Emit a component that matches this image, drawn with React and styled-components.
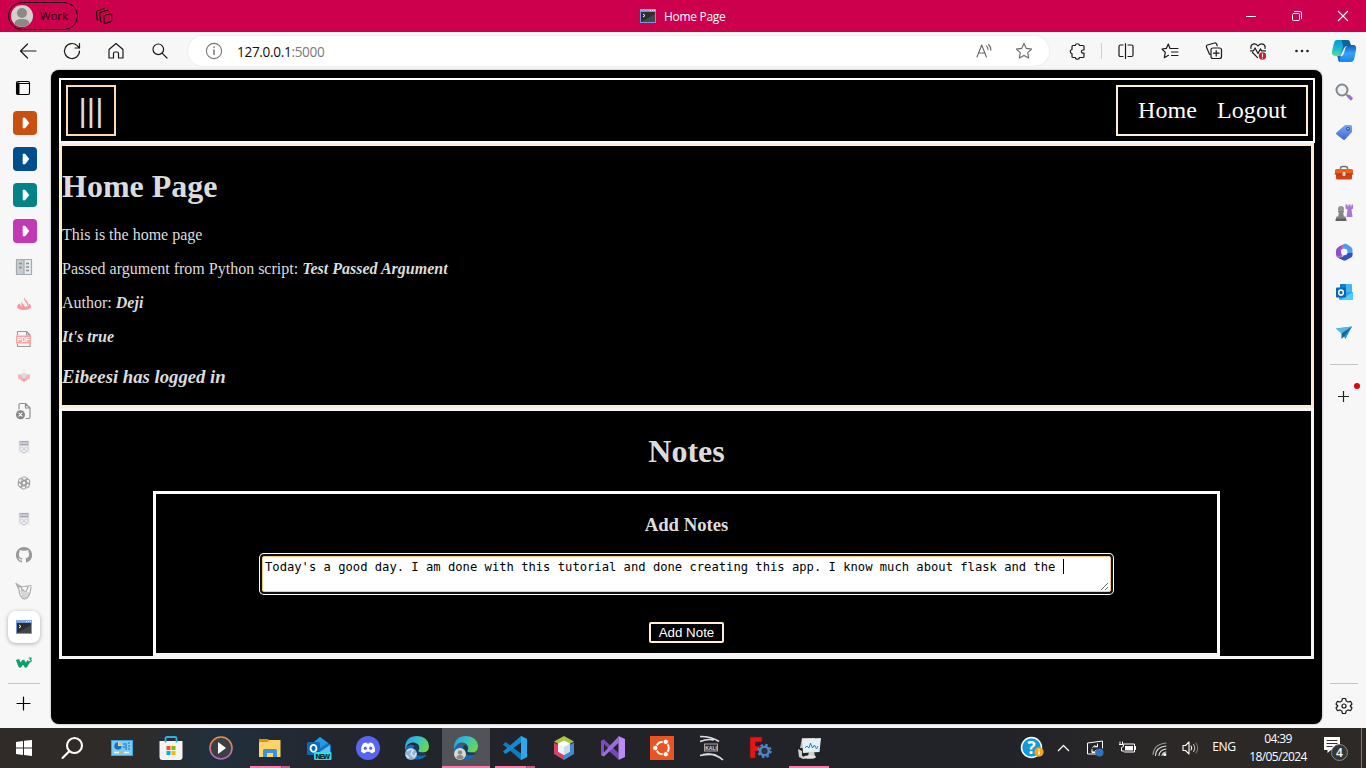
import React from "react";
import styled, { createGlobalStyle } from "styled-components";

const GlobalStyle = createGlobalStyle`
  * { box-sizing: border-box; }
  html, body { margin: 0; padding: 0; overflow: hidden; }
`;

const UI = `"Open Sans", "Noto Sans", sans-serif`;
const SERIF = `"Liberation Serif", "Times New Roman", serif`;

const Desktop = styled.div`
  width: 1366px;
  height: 768px;
  display: flex;
  flex-direction: column;
  background: #f7f7f7;
  font-family: ${UI};
  overflow: hidden;
`;

/* ---------- window chrome ---------- */
const TitleBar = styled.header`
  height: 32px;
  display: flex;
  background: #cc004c;
`;
const TitleLeft = styled.div`
  width: 640px;
  display: flex;
  align-items: center;
  padding-left: 8px;
`;
const ProfilePill = styled.div`
  width: 70px;
  height: 28px;
  border: 1px solid #16000a;
  border-radius: 14px;
  display: flex;
  align-items: center;
  gap: 7px;
  padding-left: 2px;
  margin-right: 14px;
  font-size: 11.5px;
  line-height: 20px;
  padding-bottom: 1px;
  letter-spacing: -0.1px;
  color: #16000a;
`;
const TabTitle = styled.div`
  display: flex;
  align-items: center;
  gap: 8px;
  color: #fff;
  font-size: 12px;
  letter-spacing: -0.3px;
`;
const WindowButtons = styled.div`
  display: flex;
  margin-left: auto;
`;
const Slot = styled.div`
  width: ${(p) => p.$w}px;
  height: ${(p) => p.$h}px;
  flex: none;
  display: flex;
  align-items: center;
  justify-content: center;
`;
const Toolbar = styled.div`
  height: 38px;
  display: flex;
  align-items: center;
  padding-left: 6px;
`;
const AddressBar = styled.div`
  width: 861px;
  height: 30px;
  margin: 0 6px;
  padding: 0 5px 0 14px;
  border-radius: 15px;
  background: #fff;
  box-shadow: 0 0 3px rgba(0, 0, 0, 0.08);
  display: flex;
  align-items: center;
`;
const Url = styled.span`
  margin-left: 11px;
  flex: 1;
  font-size: 13.6px;
  letter-spacing: -0.33px;
  color: #111;
  span { color: #7a7a7a; }
`;
const ToolDivider = styled.i`
  width: 1px;
  height: 16px;
  margin: 0 2px;
  background: #cfcfcf;
`;
const Body = styled.div`
  height: 658px;
  display: flex;
`;
const Rail = styled.aside`
  width: ${(p) => p.$w}px;
  padding: 0 ${(p) => p.$pr}px 0 0;
  display: flex;
  flex-direction: column;
  align-items: center;
`;
const RailDivider = styled.i`
  width: ${(p) => p.$w}px;
  height: 1px;
  flex: none;
  background: #c4c4c4;
`;
const Grow = styled.div`
  flex: 1;
`;
const ColorTile = styled.div`
  width: 24px;
  height: 24px;
  border-radius: 4px;
  background: ${(p) => p.$c};
  margin-left: 2px;
  display: flex;
  align-items: center;
  justify-content: center;
`;
const ActiveTab = styled.div`
  width: 32px;
  height: 32px;
  border-radius: 8px;
  background: #fff;
  box-shadow: 0 1px 4px rgba(0, 0, 0, 0.3);
  display: flex;
  align-items: center;
  justify-content: center;
`;

/* ---------- web page ---------- */
const Viewport = styled.main`
  width: 1271px;
  height: 654px;
  padding: 8px 7px 0 8px;
  border-radius: 8px;
  background: #000;
  box-shadow: 0 0 2px rgba(0, 0, 0, 0.45);
  color: gainsboro;
  font-family: ${SERIF};
  font-size: 16px;
`;
const Nav = styled.nav`
  width: 1256px;
  height: 65px;
  border: 2px solid #fff;
  border-bottom-color: ghostwhite;
  padding: 5px;
  display: flex;
  justify-content: space-between;
`;
const MenuButton = styled.button`
  width: 50px;
  height: 51px;
  border: 2px solid peachpuff;
  background: #000;
  color: gainsboro;
  font: 32px "Liberation Sans", Arial, sans-serif;
  padding: 0 0 1px;
`;
const Links = styled.div`
  width: 192px;
  height: 51px;
  border: 2px solid papayawhip;
  padding: 0 0 1px 20px;
  display: flex;
  align-items: center;
  gap: 20px;
  font-size: 24px;
  letter-spacing: 0.08px;
  color: #fff;
`;
const Intro = styled.section`
  width: 1255px;
  height: 265px;
  border: 3px solid blanchedalmond;
  overflow: hidden;
`;
const Heading = styled.h1`
  font-size: 32px;
  line-height: 37px;
  margin: 22px 0 21px;
`;
const SubHeading = styled.h3`
  font-size: 18.72px;
  line-height: 22px;
  margin: 20px 0 18px;
`;
const Line = styled.p`
  line-height: 18px;
  margin: 16px 0;
`;
const Em = styled.em`
  font-weight: bold;
`;
const Notes = styled.section`
  width: 1255px;
  height: 251px;
  border: 3px solid whitesmoke;
  display: flex;
  flex-direction: column;
  align-items: center;
`;
const NoteForm = styled.form`
  width: 1067px;
  height: 165px;
  flex: none;
  border: 3px solid #fff;
  border-bottom-color: #f8f4f8;
  display: flex;
  flex-direction: column;
  align-items: center;
`;
const NoteField = styled.div`
  width: 849px;
  height: 36px;
  margin: 2px 0 30px;
  border: 1px solid #f5c98a;
  border-radius: 2px;
  box-shadow: 0 0 0 2px #101010, 0 0 0 3px #fff;
  background: #fff;
  padding: 2px 1px 0 2px;
  display: flex;
  color: #000;
  font: 12.17px/17px "DejaVu Sans Mono", monospace;
  white-space: pre;
`;
const Caret = styled.i`
  width: 1px;
  height: 15px;
  background: #000;
`;
const Grip = styled.div`
  margin-left: auto;
  align-self: flex-end;
  display: flex;
`;
const AddButton = styled.button`
  width: 75px;
  height: 21px;
  padding: 0;
  border: 2px solid papayawhip;
  border-radius: 2px;
  background: #000;
  color: #fff;
  font: 13.33px "Liberation Sans", Arial, sans-serif;
`;

/* ---------- taskbar ---------- */
const TaskBar = styled.footer`
  height: 40px;
  display: flex;
  color: #fff;
  background: linear-gradient(90deg, #302b28 0, #2f2b29 130px, #20303c 215px, #23262e 330px, #222329 560px, #222329 1000px, #2b2826 1180px, #2e2925 1366px);
`;
const TaskItem = styled.div`
  width: 48px;
  height: 40px;
  flex: none;
  margin-right: ${(p) => p.$gap ?? 1}px;
  padding-bottom: 2px;
  display: flex;
  flex-direction: column;
  align-items: center;
  background: ${(p) => (p.$active ? "#515359" : "transparent")};
`;
const TaskIcon = styled.div`
  height: 38px;
  flex: none;
  padding-top: 2px;
  display: flex;
  align-items: center;
`;
const Underline = styled.i`
  width: ${(p) => p.$w}px;
  height: 2px;
  flex: none;
  background: ${(p) => (p.$split ? "linear-gradient(90deg, #ff78a9 31px, #8d3f61 31px, #c9588a 32px)" : "#ff78a9")};
`;
const Tray = styled.div`
  margin-left: auto;
  width: 350px;
  display: flex;
  align-items: center;
`;
const Lang = styled.div`
  width: 36px;
  text-align: center;
  font-size: 12.2px;
  line-height: 18px;
  padding-bottom: 2px;
  letter-spacing: -0.5px;
`;
const Clock = styled.div`
  width: 72px;
  text-align: center;
  font-size: 12px;
  line-height: 18px;
  padding-bottom: 1px;
  letter-spacing: -0.62px;
  white-space: nowrap;
`;
const ShowDesktop = styled.i`
  width: 1px;
  height: 40px;
  margin-left: auto;
  margin-right: 4px;
  background: #7b7875;
`;

/* Icons are drawn on a pixel grid; s is both the box and the viewBox size. */
const Svg = ({ s = 24, children, c = "#1b1b1b", w = 1.2 }) => (
  <svg width={s} height={s} viewBox={`0 0 ${s} ${s}`} fill="none" stroke={c} strokeWidth={w} strokeLinecap="round" strokeLinejoin="round">
    {children}
  </svg>
);

const Terminal = ({ s = 16 }) => (
  <svg width={s} height={s} viewBox="0 0 16 16">
    <rect x="0" y="1" width="16" height="14" fill="#6f9bd8" />
    <rect x="0" y="1" width="16" height="2" fill="#7fa9e0" />
    <path d="M10 2.500h1M12 2.500h1M14 2.500h1" stroke="#dbe8fb" />
    <rect x="1" y="4" width="14" height="10" fill="#2b2d2f" />
    <path d="M1 14 15 6v8z" fill="#44474a" />
    <path d="M3 6l2 1.500L3 9" stroke="#fff" fill="none" />
  </svg>
);
const Back = () => <Svg><path d="M20 12H4.500M11.500 5l-7 7 7 7" /></Svg>;
const Refresh = () => <Svg><path d="M19.500 12a7.500 7.500 0 1 1-2.300-5.400L19.500 9M19.500 4.500V9H15" /></Svg>;
const HomeIcon = () => <Svg><path d="M5 10.500 12 4.500l7 6V19h-4.500v-4.500a1.500 1.500 0 0 0-1.500-1.500h-2a1.500 1.500 0 0 0-1.500 1.500V19H5z" /></Svg>;
const Search = () => <Svg><circle cx="10.300" cy="10.300" r="5.300" /><path d="M14.300 14.300 19 19" /></Svg>;
const Info = () => <Svg c="#777" w={1.1}><circle cx="12" cy="12" r="7.600" /><path d="M12 11v4.500M12 8v.500" strokeWidth={1.5} /></Svg>;
const ReadAloud = () => <Svg c="#666" w={1.1}><path d="m5 18 4.700-12 4.700 12M6.600 14h6.200M14.500 6.800q1.500 1.500 1.500 3.800M16.600 5.500q2.600 2.600 2.300 5.600" /></Svg>;
const starPath = "m12 4.500 2.300 4.900 5.300.700-3.900 3.600 1 5.300-4.700-2.600L7.300 19l1-5.300-3.900-3.600 5.300-.700z";
const Star = () => <Svg c="#666" w={1.1}><path d={starPath} /></Svg>;
const Puzzle = () => (
  <Svg><path d="M9 6.500h1.200a2.200 2.200 0 0 1 4.300 0H18a1 1 0 0 1 1 1V11h-1a1.500 1.500 0 0 0 0 3.200h1v3.300a1 1 0 0 1-1 1h-3.500a2.200 2.200 0 0 1-4.300 0H8a1 1 0 0 1-1-1V14.700a2.200 2.200 0 0 1 0-4.300V7.500a1 1 0 0 1 1-1z" /></Svg>
);
const Split = () => <Svg><path d="M9 6H6.500A1.500 1.500 0 0 0 5 7.500v8A1.500 1.500 0 0 0 6.500 17.500H9M14 6h3.500A1.500 1.500 0 0 1 19 7.500v8.500a1.500 1.500 0 0 1-1.500 1.500H14M11.500 4.500v15" /></Svg>;
const Favorites = () => <Svg><path d="M13.500 9.500H12L10.300 5 8.300 9.400 4 10l3.300 3.400-1 5.300 4.200-2.400M13.500 9.500H20M13.500 13H20M13.500 16.500H20" /></Svg>;
const Collections = () => <Svg><rect x="9" y="9" width="10.500" height="10.500" rx="2" /><path d="M14.200 11.500v5.500M11.500 14.200H17M8.500 15.500l-1-.300L4.500 8.300A1.700 1.700 0 0 1 5.500 6l7-2a1.700 1.700 0 0 1 2.100 1l.600 1.800" /></Svg>;
const Heart = () => (
  <Svg>
    <path d="M5 9.500C4 5 9.500 3 12 7c2.500-4 8-2 7 2.500M6.500 13.500l5 5.200M4.500 11.800h3l1.500-2.800 3 5.500 2.500-4.600 1 1.900h4" />
    <circle cx="16.500" cy="17" r="3.700" fill="#c4262e" stroke="none" />
    <path d="M16.500 15v2.400M16.500 19v.100" stroke="#fff" strokeWidth="1" />
  </Svg>
);
const Dots = () => <Svg w={0}><g fill="#222"><circle cx="6.500" cy="12" r="1.300" /><circle cx="12" cy="12" r="1.300" /><circle cx="17.500" cy="12" r="1.300" /></g></Svg>;
const Copilot = () => (
  <svg width="26" height="26" viewBox="0 0 26 26">
    <defs>
      <linearGradient id="cpA" x1="0" y1="0" x2="0" y2="1"><stop offset="0" stopColor="#0898dc" /><stop offset=".5" stopColor="#19b6d3" /><stop offset="1" stopColor="#58df8c" /></linearGradient>
      <linearGradient id="cpB" x1="0" y1="0" x2="0" y2="1"><stop offset="0" stopColor="#0a5fc0" /><stop offset=".5" stopColor="#36a2f5" /><stop offset="1" stopColor="#1485f2" /></linearGradient>
    </defs>
    <path d="M6 2h10q3 0 2.500 2.200L14 15q-.800 3-4 3H5q-5 0-4-5L3 5q.600-3 3-3z" fill="url(#cpA)" />
    <path d="M20 7h2q4 0 3 5l-1.500 8q-.800 4-4 4H10q-3 0-2.500-3l3.500-10Q12 7 15 7z" fill="url(#cpB)" />
    <path d="M10.500 2H16q2.500 0 3 2l1.200 4h-5q-2 0-2.500 2z" fill="#0b6398" />
    <path d="M13 10.500Q13.800 8 16 8q-1.500 1-2 3l-1 4q-.800 3-3 3.500H8q2-.500 2.800-3z" fill="#fff" />
    <path d="M6 18h4q-1 1-1 3v3q-1.500 0-2-3-.300-2.500-1-3z" fill="#1764d8" />
  </svg>
);
const Workspaces = () => (
  <Svg c="#180009" w={1.1}>
    <path d="M13 11.200 18.500 9.700a1 1 0 0 1 1.200 1V16.500a1 1 0 0 1-.700 1l-5.500 2a1 1 0 0 1-1.300-.800l-.200-6.300a1.200 1.200 0 0 1 1-1.200z" />
    <path d="M9.500 17.700a1 1 0 0 1-1-1L7.700 9.500a1.200 1.200 0 0 1 1-1.300l6.300-1.900q1-.300 1 .700M6 16a1 1 0 0 1-1-1L4.500 8.200a1.200 1.200 0 0 1 .800-1.200L12 4.500" />
  </Svg>
);

/* rail icons */
const TabPane = () => <Svg w={1.1} c="#000"><rect x="4.500" y="5.500" width="13" height="13" rx="1.500" /><path d="M5 7.500h12.500" /><path d="M6 6.500v12" strokeWidth="3" strokeLinecap="butt" /></Svg>;
const PlayHead = () => <svg width="24" height="24"><path d="M10 7h2l4 5-4 5h-2z" fill="#fff" stroke="#fff" strokeLinejoin="round" strokeWidth=".6" /></svg>;
const Panel = () => (
  <Svg c="#a4aaaf" w={1.2}>
    <rect x="4.500" y="4.500" width="15" height="15" fill="#e6eaed" /><rect x="5" y="5" width="7" height="14" fill="#c4ccd1" stroke="none" /><path d="M12 5v14" />
    <path d="M7 8.500h3M7 12.500h3M14 8.500h3M14 12h3M14 15.500h3" stroke="#888f95" strokeLinecap="butt" strokeWidth="1.500" />
  </Svg>
);
const Flame = () => (
  <Svg w={0}><g fill="#f8989c"><path d="M8 12.500c-5 2-3.500 6.500 4 6.500s9-4.500 4.500-6.500Q17 17 12 16.500q-4 0-4-4z" /><path d="M12.300 6q-1.200 2 .700 4 2.500 3 2 5 2.500-2-.500-5.500Q12.300 8 12.300 6zM10.500 9q-1.500 2 1 4.500 1.800 1.500 1 3.500-5.500-1.500-2-8z" /><path d="M8.500 14q0 3.500 7.500 1v2.500q-6 2-9-1z" /></g></Svg>
);
const Pdf = () => (
  <Svg c="#999" w={1.1}>
    <path d="M5.500 8V4.500h9l3.500 3.500v11.500H5.500V17M14.500 4.500V8H18" />
    <rect x="4" y="8.500" width="15" height="8" fill="#ffa3a1" stroke="none" />
    <text x="11.500" y="14.800" textAnchor="middle" fontSize="6.300" fontWeight="bold" fontFamily="Liberation Sans, sans-serif" fill="#fff" stroke="none">PDF</text>
  </Svg>
);
const Bloom = () => <Svg w={0}><path d="M6 11l3 1 3-2 3 2 3-1v4.500l-6 3.500-6-3.500z" fill="#f9b4ba" /><path d="m8 11 4 5 4-5-4-1.500z" fill="#cfdcf4" /><path d="m10.500 12 1.500 2 1.500-2-1.500-1z" fill="#f2dc9c" /><path d="m9 15 3 2 3-2-3 3.500z" fill="#f38c94" /><path d="m8 8 4-2 4 2-4 2z" fill="#fbeef0" /></Svg>;
const BrokenFile = () => (
  <Svg c="#8f8f8f">
    <path d="M7 10V6a1.500 1.500 0 0 1 1.500-1.500h5L18 9v9a1.500 1.500 0 0 1-1.500 1.500H14M13.500 4.500V9H18" />
    <circle cx="8.500" cy="15.700" r="4.500" fill="#858585" stroke="none" /><path d="m7 14.200 3 3m0-3-3 3" stroke="#fff" />
  </Svg>
);
const Badge = () => <Svg w={0}><rect x="6" y="5" width="12" height="14" fill="#f0f0f3" /><path d="M7.500 6h9v4.500h-9z" fill="#aaabb9" /><path d="M8.500 8h7" stroke="#ececf2" strokeWidth="1" strokeDasharray="1.500 1" /><path d="M8 11.500v4l4 2.500 4-2.500v-4M10 12l4 3.500m0-3.500-4 3.500" stroke="#c4c5cc" strokeWidth="1" fill="none" /></Svg>;
const Knot = () => (
  <Svg c="#9c9c9c" w={1}>
    {[0, 60, 120, 180, 240, 300].map((a) => <path key={a} transform={`rotate(${a} 12 12)`} d="M10 13V8.500a2.600 2.600 0 0 1 4-2.200M10 8.200l4.500 2.600M8.500 7.800 10 6.500" />)}
  </Svg>
);
const GitHub = () => (
  <Svg w={0}><path fill="#999" d="M12 4a8 8 0 0 0-2.600 15.600c.400.100.600-.200.600-.400v-1.600c-2.200.500-2.700-.900-2.900-1.400-.300-.700-.700-.900-.700-.900-.800-.500 0-.500 0-.500.800 0 1.300.800 1.300.800.700 1.300 1.900.900 2.400.700 0-.500.300-.900.500-1.100-1.800-.200-3.700-.900-3.700-4 0-.900.300-1.600.800-2.100-.100-.200-.300-1 .100-2.100 0 0 .700-.200 2.200.800a7.500 7.500 0 0 1 4 0c1.500-1 2.200-.800 2.200-.800.400 1.100.200 1.900.100 2.100.500.600.800 1.300.800 2.100 0 3.100-1.900 3.800-3.700 4 .300.300.600.700.600 1.500v2.500c0 .200.100.500.600.400A8 8 0 0 0 12 4z" /></Svg>
);
const Flask = () => (
  <Svg c="#aaa" w={1.2}><path d="m4 4.500 5 3 2 8M5 7l3 1M9 8l10-1.500M7 10q0 9 6 10 5-1 6-12M11 11l5 5M16 8l-4 9M10 17q5 3 8-3M4.500 5 7 11" /><path d="M8 12l3 7 5-1 1-5z" fill="#d5d5d5" stroke="none" /></Svg>
);
const W3 = () => (
  <Svg c="#0ba06b" w={3.4}><path d="m5.500 8.500 2.500 6.500 3.300-4.500 2.500 4.500 3-5" strokeLinecap="butt" /><path d="M17 7h2.300l-1.300 1.600q2 .300 1 1.700-.700.900-2 .200" strokeWidth="1.100" /></Svg>
);
const Plus = ({ c = "#000" }) => <Svg c={c} w={1.2}><path d="M11.500 5v13M5 11.500h13" /></Svg>;

const Magnifier = () => <Svg w={2} c="#858585"><circle cx="10" cy="10" r="5.500" fill="#eef3f7" /><path d="m15 15 1.500 1.500" /><path d="m17 16.500 2 2" stroke="#9d6dce" strokeWidth="3.300" /></Svg>;
const Tag = () => (
  <Svg w={0}><defs><linearGradient id="tg" x1="0" y1="0" x2="0" y2="1"><stop offset="0" stopColor="#7ea8f3" /><stop offset="1" stopColor="#3d67cf" /></linearGradient></defs>
    <path d="M13 5h5.500A1.500 1.500 0 0 1 20 6.500V12l-7 7.500q-1 .800-2 0L4.500 14.500q-1-1 0-2z" fill="url(#tg)" /><circle cx="16" cy="8.800" r="1.300" fill="#fff" stroke="#244a9d" strokeWidth="1.200" /></Svg>
);
const Toolbox = () => <Svg w={0}><path d="M8.500 10V8.500a2 2 0 0 1 2-2h3a2 2 0 0 1 2 2V10" stroke="#727272" strokeWidth="1.500" /><path d="M4 13h16v5a1.500 1.500 0 0 1-1.500 1.500h-13A1.500 1.500 0 0 1 4 18z" fill="#d14212" /><path d="M3 10.500A1.500 1.500 0 0 1 4.500 9h15a1.500 1.500 0 0 1 1.500 1.500V14H3z" fill="#ee5f20" /><path d="M3 14h18" stroke="#a9320a" strokeWidth="1" /><rect x="10.500" y="12" width="3" height="4" rx="1" fill="#d9d9d9" /></Svg>;
const Chess = () => <Svg w={0}><path d="M13.500 4.500h2v1.700h1V4.500h2v1.700h1V4.500H21v4l-1.500 1 1 7.500h-6l1-7.500-2-1z" fill="#a877d8" /><circle cx="9" cy="9" r="3" fill="#949494" /><path d="M6 11h6v1.500h-1l1 4h1.500l1 4h-11l1-4H6l1-4H6z" fill="#858585" /><path d="M4 18.500h10l.500 2.500h-11z" fill="#5f5f5f" /></Svg>;
const M365 = () => (
  <Svg w={0}>
    <path d="M12.500 3.800 6.500 7Q4 8.500 4 11v4q0 1.500 1.500 2.500L9 19l2-5-2-3 4-4z" fill="#b36bdc" />
    <path d="M12.500 3.800Q14 3.500 15.500 4.500L19 7q1.500 1 1.500 3v4.500L15 13l-1-3.500L10.500 8z" fill="#4f9fe8" />
    <path d="M20.500 13v2q0 1.500-1.500 2.500l-5 2.800q-1.500.800-3 0L6 17.800q5 .2 6-3.300l3-1.500z" fill="#3550bd" />
    <path d="M4 14q1 3 4.500 1.500L10 14l-2-4 2.500-5L7 6.800Q4 8.500 4 11z" fill="#7a48c0" opacity=".75" />
    <circle cx="12.300" cy="12" r="3.200" fill="#f7f7f7" />
  </Svg>
);
const Outlook = () => (
  <Svg w={0}><rect x="8" y="4" width="12" height="9" rx="1" fill="#42b8f1" /><path d="M8 4h6v5H8z" fill="#1480cb" /><path d="M7 12h14v6.500a1.500 1.500 0 0 1-1.500 1.500h-11A1.500 1.500 0 0 1 7 18.500z" fill="#28a5e8" /><path d="m21 12-13 8h11.500q1.500 0 1.500-1.500z" fill="#50cdf6" /><rect x="4" y="7.500" width="10" height="10" rx="1" fill="#0765b6" /><ellipse cx="9" cy="12.500" rx="2.300" ry="2.600" stroke="#fff" strokeWidth="1.500" /></Svg>
);
const Plane = () => <Svg w={0}><path d="m4 8.500 16-2-6.500 12.500-3.500-5.500z" fill="#209bdb" /><path d="M20 6.500 9.500 13.500 4 8.500z" fill="#58b7e9" /><path d="M20 6.500 9.500 13.500V19l3-3z" fill="#12679e" /></Svg>;
const Gear = () => (
  <Svg w={1.2}><path d="m10.500 4.500h3l.700 2.500 1.800 1 2.500-.700 1.500 2.700-1.800 2 1.800 2-1.500 2.700-2.500-.700-1.800 1-.700 2.500h-3L9.800 17 8 16l-2.500.700L4 14l1.800-2L4 10l1.500-2.700L8 8l1.800-1z" /><circle cx="12" cy="12" r="2" /></Svg>
);

/* taskbar icons */
const WinLogo = () => <svg width="24" height="24"><path d="M4 6l7-1v6.500H4zM12 4.800 20 4v7.500h-8zM4 12.500h7V19l-7-1zM12 12.500h8V20l-8-.900z" fill="#fff" /></svg>;
const BigSearch = () => <Svg c="#fff" w={2.1}><circle cx="14.500" cy="9.500" r="7.500" /><path d="M9 15.500 2.500 22" /></Svg>;
const ControlPanel = () => (
  <svg width="24" height="24"><rect x="1" y="4" width="22" height="16" fill="#3aa6e2" /><rect x="2" y="5" width="20" height="14" fill="#79cdf4" /><circle cx="8" cy="10" r="3.800" fill="#e3f3fb" /><path d="M8 10V6.200A3.800 3.800 0 1 0 11.800 10z" fill="#1770b8" /><path d="M8.500 9.500V6.500a3 3 0 0 1 3 3z" fill="#ffb33c" /><path d="M13 8h2M13 11h2M16 7v7M18 7h2M18 10h2M18 13h2" stroke="#1b6caa" /><path d="M4 16.500h5M14 16.500h5" stroke="#e9f7ff" strokeWidth="1.500" /><path d="M9 16.500h3" stroke="#f3a42d" strokeWidth="1.500" /></svg>
);
const Store = () => (
  <svg width="24" height="24"><path d="M.500 5h23v16a3 3 0 0 1-3 3h-17a3 3 0 0 1-3-3z" fill="#f4f4f4" /><path d="M6.500 6.500V2.500A1.500 1.500 0 0 1 8 1h8a1.500 1.500 0 0 1 1.500 1.500v4" fill="none" stroke="#27b2e9" strokeWidth="1.800" /><path d="M7.500 10h4v4h-4z" fill="#f1511b" /><path d="M12.500 10h4v4h-4z" fill="#80bd01" /><path d="M7.500 15h4v4h-4z" fill="#00aeef" /><path d="M12.500 15h4v4h-4z" fill="#fbb900" /></svg>
);
const Player = () => (
  <svg width="24" height="24"><defs><linearGradient id="mp" x1="0" y1="0" x2="0" y2="1"><stop offset="0" stopColor="#f58b3d" /><stop offset="1" stopColor="#a966c7" /></linearGradient></defs><circle cx="12" cy="12" r="11" fill="#3c4043" stroke="url(#mp)" strokeWidth="1.600" /><path d="m9 6 8 6-8 6z" fill="#fff" /></svg>
);
const Folder = () => <svg width="24" height="24"><path d="M1 3h9l1.500 2v4H1z" fill="#dc9500" /><path d="M1 6h8.500l1.500-2h11.500v17H1z" fill="#ffd466" /><path d="M5 21v-6.500A1.500 1.500 0 0 1 6.500 13h11a1.500 1.500 0 0 1 1.500 1.500V21h-4v-4H9v4z" fill="#3c92d6" /></svg>;
const OutlookNew = () => (
  <svg width="26" height="26"><path d="M7 8 14 2l11 8v10l-12 4-8-6z" fill="#126fc5" /><path d="m14 2 8 6-9 6-5-7z" fill="#249be0" /><path d="m24 10-12 8v6h10q2 0 2-2z" fill="#59c5f0" /><rect x="1" y="7" width="13" height="13" rx="1.500" fill="#0f68b8" /><ellipse cx="7.500" cy="13.300" rx="3" ry="3.500" fill="none" stroke="#fff" strokeWidth="1.800" /><rect x="8" y="17" width="17.500" height="8" rx="1" fill="#35dce7" /><text x="16.700" y="23.700" textAnchor="middle" fontSize="6.800" fontWeight="bold" fontFamily="DejaVu Sans, sans-serif" fill="#062631" textLength="15">NEW</text></svg>
);
const Discord = () => (
  <svg width="24" height="24"><circle cx="12" cy="12" r="12" fill="#5865f2" /><path d="M7 7.500q2-1 3.500-1l.500 1h2l.500-1q2 .200 3.500 1 2.500 4 2 8-1.700 1.500-4 1.800l-1-1.600h-4l-1 1.600q-2.300-.300-4-1.800-.500-4.300 2-8z" fill="#fff" /><ellipse cx="9.300" cy="12.300" rx="1.500" ry="1.700" fill="#5865f2" /><ellipse cx="14.700" cy="12.300" rx="1.500" ry="1.700" fill="#5865f2" /></svg>
);
const Edge = ({ person }) => (
  <svg width="26" height="26" viewBox="0 0 26 26"><defs><linearGradient id="eg" x1="0" y1="0" x2="1" y2=".5"><stop offset="0" stopColor="#1e9ee2" /><stop offset=".5" stopColor="#35c0d0" /><stop offset="1" stopColor="#66d654" /></linearGradient></defs>
    <path d="M1 13q1 9 8 11 7 2 13-3 1-1.500-1-1-7 2-11-2-3-4 1-7-4-4-10 2z" fill="#1668b8" />
    <path d="M1 12Q2 1 13 1q11 .500 12 10 0 6-6 6.500-4 0-5-1.500 2-2 1-5-2-4-7-3.500T1 15z" fill="url(#eg)" />
    <path d="M11 10q3 0 4 3 0 2-1 3 1 2 5 1.500l4 1q-2 2-7 1.500-6-1.500-6-6z" fill="#173b59" />
    <circle cx="7" cy="19" r="6" fill={person ? "#dad9d5" : "#8fb3d5"} />
    {person ? <g fill="#8d8b88"><circle cx="7" cy="17.500" r="2.200" /><path d="M3.200 23q.500-3 3.800-3t3.800 3q-3.800 3-7.600 0z" /></g> : <path d="M3 16q3-3 6-1l-2 4 3 3q2-2 2-4M2 20l3 3" stroke="#d8e6f2" fill="none" strokeWidth="1.500" />}
  </svg>
);
const VsCode = () => <svg width="24" height="24"><path d="m18 0 6 3v18l-6 3L0 8.500 2.500 6 18 17.500z" fill="#0c7cc5" /><path d="M18 0v6.500L2.500 18 0 15.500 18 0z" fill="#1689d2" /><path d="m18 0 6 3v18l-6 3z" fill="#2ba9f0" /></svg>;
const NetBeans = () => <svg width="24" height="24"><path d="m12 0 10 5.500L12 11 2 5.500z" fill="#acc53f" /><path d="M2 6.500 12 12v12L2 18z" fill="#d64268" /><path d="M22 6.500 12 12v12l10-6z" fill="#4589cd" /><path d="m12 4.500 6 3v8l-6 3.500-6-3.500v-8z" fill="#fff" /><path d="m12 11 6-3.500v8L12 19z" fill="#ccdbe6" /><path d="m6 7.500 6 3.500V19l-6-3.500z" fill="#eef2f5" /></svg>;
const VStudio = () => <svg width="24" height="24"><path d="m0 5 3-1.500L17.500 17v6.500L0 8z" fill="#7549b7" /><path d="M3 20.500 0 19V5l3-1.500z" fill="#7a4fc0" /><path d="M17.500.500V7L3 20.500 0 19 17.500.500z" fill="#9b6bdf" /><path d="m17.500 0 6.500 3v18l-6.500 3z" fill="#bb8bf5" /><path d="M3 8v8l4-4z" fill="#23252a" /></svg>;
const Ubuntu = () => (
  <svg width="24" height="24"><rect width="24" height="24" fill="#e95420" /><circle cx="12.500" cy="12" r="6.300" fill="none" stroke="#fff" strokeWidth="2" /><g fill="#fff" stroke="#e95420"><circle cx="5.300" cy="12" r="2.700" /><circle cx="15.800" cy="5.800" r="2.700" /><circle cx="15.800" cy="18.200" r="2.700" /></g></svg>
);
const Kali = () => (
  <svg width="26" height="26" fill="none" stroke="#dedede"><path d="M2 1.500q12 0 19 5M2 6.500q8-3 14-1.500M5 19.500q12-2 20 5.500M2 20.500q10-2 16-.500" strokeWidth="1.700" /><rect x="6.500" y="9" width="13" height="7" fill="#2a2b30" stroke="#aaa" /><text x="13" y="14.500" textAnchor="middle" fontSize="5" fontFamily="Liberation Sans, sans-serif" fontWeight="bold" fill="#ddd" stroke="none">KALI</text></svg>
);
const FreeCad = () => (
  <svg width="26" height="26"><path d="M3 2h12v5H8.500v4H13v5H8.500v7H3z" fill="#e01818" stroke="#8d0909" strokeWidth=".7" /><circle cx="17.500" cy="16" r="4.300" fill="none" stroke="#4f86c6" strokeWidth="2.600" /><circle cx="17.500" cy="16" r="6.300" fill="none" stroke="#4f86c6" strokeWidth="1.800" strokeDasharray="2.500 2.450" /><circle cx="17.500" cy="16" r="2.600" fill="#2d3340" /></svg>
);
const Monitor = () => (
  <svg width="26" height="26"><path d="M6 3h13l-2 10H4z" fill="#b9bdb9" /><path d="M6 4 25 3l-1.500 14L7 18z" fill="#e9ebe9" /><path d="M8 6 23 5l-1 10-13 1z" fill="#dff2fa" /><path d="m9 13 2-2 2 2 1.500-5 2 5 2-3 2 4 1.500-3" stroke="#2a7bc0" fill="none" /><path d="M13 17h5l1 4h-7zM2 14l4 2v5l7 2-6 1-4-2z" fill="#cdd0ce" /><ellipse cx="14" cy="22" rx="6" ry="1.800" fill="#e3e3e3" /></svg>
);
const HelpIcon = () => (
  <svg width="24" height="26"><circle cx="11.500" cy="12.500" r="10" fill="#119bdc" stroke="#fff" strokeWidth="1.500" /><text x="11.500" y="18.500" textAnchor="middle" fontSize="17" fontWeight="bold" fontFamily={'"Open Sans", sans-serif'} fill="#fff">?</text><circle cx="19" cy="17" r="4.700" fill="#f3a61c" /><path d="M19 16.300v3.200M19 14.300v.900" stroke="#fff" strokeWidth="1.500" /></svg>
);
const Chevron = () => <Svg c="#fff"><path d="m6 15 5.500-5.500L17 15" strokeLinecap="butt" /></Svg>;
const Sync = () => <Svg c="#fff" w={1}><path d="M13 18H3.500V7L18.500 5v7M8 13.500v3h3M8 16q3 1 4.500-2M13.500 8v2.800h-3M13 10.500q-3-2-4.500 1" /><circle cx="15.500" cy="16.500" r="4" fill="#3272c4" stroke="none" /></Svg>;
const Battery = () => <Svg c="#fff" w={1}><path d="M7.500 8h11v8h-10M19.500 10.500v3M4 6v2M6.500 6v2M3.500 8.500h4v2L5.500 11.500v3.500H8" /><path d="M9 10h8v4.500H9z" fill="#fff" stroke="none" /></Svg>;
const Wifi = () => <Svg c="#ddd" w={1.1}><path d="M7.500 19.500Q8 11 18 10M11 19.500q.500-5.500 7-6.500M14 19.500q.500-3 4-3.500" /><path d="M5 18.500Q6 8 18 7" stroke="#999" /><circle cx="16.800" cy="18.500" r="1.600" fill="#fff" stroke="none" /></Svg>;
const Volume = () => <Svg c="#fff" w={1.1}><path d="M4 9.500h2.500L10 6v12l-3.500-3.500H4zM12 10q1.500 2 0 4" /><path d="M14.500 8.500q2.500 3.500 0 7" stroke="#bbb" /><path d="M17 7q3.500 5 0 10" stroke="#777" /></Svg>;
const Notification = () => (
  <svg width="28" height="28"><path d="M3 3h16v13h-9l-3.500 3v-3H3z" fill="#fff" /><path d="M5.500 6.500h11M5.500 9.500h11M5.500 12.500h6" stroke="#333" /><circle cx="18.500" cy="18.500" r="8" fill="#333536" stroke="#8a8a8a" /><text x="18.500" y="23" textAnchor="middle" fontSize="12" fontWeight="600" fontFamily={'"Open Sans", sans-serif'} fill="#fff">4</text></svg>
);

const toolbarLeft = [Back, Refresh, HomeIcon, Search];
const toolbarRight = [Split, Favorites, Collections, Heart, Dots];
const tiles = ["#ca5010", "#004e8c", "#038387", "#c239b3"];
const savedTabs = [Panel, Flame, Pdf, Bloom, BrokenFile, Badge, Knot, Badge, GitHub, Flask];
const sidebarApps = [Magnifier, Tag, Toolbox, Chess, M365, Outlook, Plane];
const taskApps = [
  { icon: <WinLogo />, gap: 0 }, { icon: <BigSearch />, gap: 2 }, { icon: <ControlPanel /> }, { icon: <Store />, gap: 2 },
  { icon: <Player /> }, { icon: <Folder />, line: 40, split: true }, { icon: <OutlookNew /> }, { icon: <Discord /> },
  { icon: <Edge /> }, { icon: <Edge person />, line: 48, active: true }, { icon: <VsCode />, line: 40, split: true },
  { icon: <NetBeans /> }, { icon: <VStudio /> }, { icon: <Ubuntu /> }, { icon: <Kali /> }, { icon: <FreeCad /> },
  { icon: <Monitor />, line: 40 },
];

export default function App() {
  return (
    <Desktop>
      <GlobalStyle />
      <TitleBar>
        <TitleLeft>
          <ProfilePill>
            <svg width="22" height="22"><circle cx="11" cy="11" r="11" fill="#d3d1ce" /><circle cx="11" cy="8" r="5" fill="#8c8985" /><path d="M3.500 19q0-5 7.500-5t7.500 5q-3.500 3-7.500 3t-7.500-3z" fill="#8c8985" /></svg>
            Work
          </ProfilePill>
          <Workspaces />
        </TitleLeft>
        <TabTitle><Terminal />Home Page</TabTitle>
        <WindowButtons>
          <Slot $w={46} $h={32}><Svg c="#fff" w={1}><path d="M7 12.500h10" strokeLinecap="butt" /></Svg></Slot>
          <Slot $w={46} $h={32}><Svg c="#fff" w={1}><rect x="7.500" y="9.500" width="7" height="7" rx="1" /><path d="M9.500 7.500h5.500a1.500 1.500 0 0 1 1.500 1.500v5.500" /></Svg></Slot>
          <Slot $w={46} $h={32}><Svg c="#fff" w={1.1}><path d="m7 7 10 10M17 7 7 17" strokeLinecap="butt" /></Svg></Slot>
        </WindowButtons>
      </TitleBar>

      <Toolbar>
        {toolbarLeft.map((Icon, i) => <Slot key={i} $w={44} $h={38}><Icon /></Slot>)}
        <AddressBar>
          <Info />
          <Url>127.0.0.1<span>:5000</span></Url>
          <Slot $w={40} $h={30}><ReadAloud /></Slot>
          <Slot $w={40} $h={30}><Star /></Slot>
        </AddressBar>
        <Slot $w={44} $h={38}><Puzzle /></Slot>
        <ToolDivider />
        {toolbarRight.map((Icon, i) => <Slot key={i} $w={44} $h={38}><Icon /></Slot>)}
        <Slot $w={40} $h={38}><Copilot /></Slot>
      </Toolbar>

      <Body>
        <Rail $w={51} $pr={3}>
          <Slot $w={48} $h={35}><TabPane /></Slot>
          {tiles.map((c) => <Slot key={c} $w={48} $h={36}><ColorTile $c={c}><PlayHead /></ColorTile></Slot>)}
          {savedTabs.map((Icon, i) => <Slot key={i} $w={48} $h={36}><Icon /></Slot>)}
          <Slot $w={48} $h={36}><ActiveTab><Terminal /></ActiveTab></Slot>
          <Slot $w={48} $h={36}><W3 /></Slot>
          <Slot $w={48} $h={2} />
          <RailDivider $w={32} />
          <Slot $w={48} $h={39}><Plus /></Slot>
        </Rail>

        <Viewport>
          <Nav>
            <MenuButton>|||</MenuButton>
            <Links><span>Home</span><span>Logout</span></Links>
          </Nav>
          <Intro>
            <Heading>Home Page</Heading>
            <Line>This is the home page</Line>
            <Line>Passed argument from Python script: <Em>Test Passed Argument</Em></Line>
            <Line>Author: <Em>Deji</Em></Line>
            <Line><Em>It's true</Em></Line>
            <SubHeading><Em>Eibeesi has logged in</Em></SubHeading>
          </Intro>
          <Notes>
            <Heading>Notes</Heading>
            <NoteForm>
              <SubHeading>Add Notes</SubHeading>
              <NoteField>
                <span>{"Today's a good day. I am done with this tutorial and done creating this app. I know much about flask and the "}</span>
                <Caret />
                <Grip><svg width="9" height="9" stroke="#555" strokeWidth=".9"><path d="M1 8 8 1M5 8l3-3" /></svg></Grip>
              </NoteField>
              <AddButton type="button">Add Note</AddButton>
            </NoteForm>
          </Notes>
        </Viewport>

        <Rail $w={44} $pr={0}>
          <Slot $w={44} $h={2} />
          {sidebarApps.map((Icon, i) => <Slot key={i} $w={44} $h={40}><Icon /></Slot>)}
          <Slot $w={44} $h={12} />
          <RailDivider $w={28} />
          <Slot $w={44} $h={62}>
            <svg width="36" height="36"><path d="M17.500 13v11M12 18.500h11" stroke="#222" strokeWidth="1.200" /><circle cx="31" cy="8" r="3" fill="#e3000b" /></svg>
          </Slot>
          <Grow />
          <RailDivider $w={28} />
          <Slot $w={44} $h={44}><Gear /></Slot>
        </Rail>
      </Body>

      <TaskBar>
        {taskApps.map((app, i) => (
          <TaskItem key={i} $gap={app.gap} $active={app.active}>
            <TaskIcon>{app.icon}</TaskIcon>
            {app.line && <Underline $w={app.line} $split={app.split} />}
          </TaskItem>
        ))}
        <Tray>
          <Slot $w={32} $h={40}><HelpIcon /></Slot>
          <Slot $w={32} $h={40}><Chevron /></Slot>
          <Slot $w={32} $h={40}><Sync /></Slot>
          <Slot $w={32} $h={40}><Battery /></Slot>
          <Slot $w={32} $h={40}><Wifi /></Slot>
          <Slot $w={30} $h={40}><Volume /></Slot>
          <Lang>ENG</Lang>
          <Clock>04:39<br />18/05/2024</Clock>
          <Slot $w={42} $h={40}><Notification /></Slot>
          <ShowDesktop />
        </Tray>
      </TaskBar>
    </Desktop>
  );
}
